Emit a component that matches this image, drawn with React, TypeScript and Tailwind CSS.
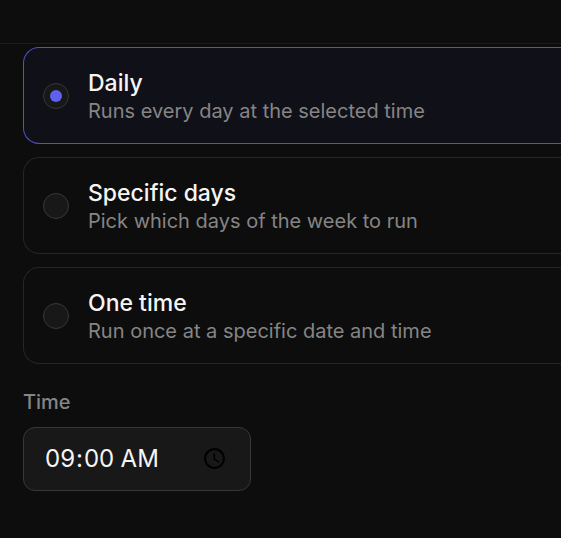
import { useState } from "react"

const OPTIONS = [
  { value: "daily", title: "Daily", description: "Runs every day at the selected time" },
  { value: "specific", title: "Specific days", description: "Pick which days of the week to run" },
  { value: "once", title: "One time", description: "Run once at a specific date and time" },
]

export default function App() {
  const [frequency, setFrequency] = useState("daily")
  const [time, setTime] = useState("09:00")

  return (
    <div className="min-h-screen overflow-hidden bg-[#0d0d0d] font-['Inter',sans-serif] text-[#f5f5f5]">
      <header className="h-11 border-b border-[#1c1c1c]" />

      <main className="pt-[3px] pb-12 pl-[23px]">
        <div role="radiogroup" aria-label="Frequency" className="flex flex-col gap-[13px]">
          {OPTIONS.map((option) => (
            <label
              key={option.value}
              className={`flex cursor-pointer items-center gap-[19px] rounded-l-2xl border border-r-0 px-[19px] py-[18px] ${
                frequency === option.value ? "border-[#5053c4] bg-[#101018]" : "border-[#262626]"
              }`}
            >
              <input
                type="radio"
                name="frequency"
                value={option.value}
                checked={frequency === option.value}
                onChange={() => setFrequency(option.value)}
                aria-label={option.title}
                className="grid size-[26px] shrink-0 appearance-none place-items-center rounded-full border border-[#383838] bg-[#181818] before:size-3 before:rounded-full checked:before:bg-[#5e61ee]"
              />
              <span className="flex min-w-0 flex-col pt-[2px]">
                <span className="text-[23px] leading-[30px] font-medium">{option.title}</span>
                <span className="text-[20px] leading-[27px] text-[#858585]">{option.description}</span>
              </span>
            </label>
          ))}
        </div>

        <div className="mt-6 flex flex-col items-start gap-[11px]">
          <label htmlFor="time" className="text-[20px] leading-7 font-medium text-[#858585]">
            Time
          </label>
          <input
            id="time"
            type="time"
            value={time}
            onChange={(e) => setTime(e.target.value)}
            className="h-16 w-[228px] rounded-xl border border-[#383838] bg-[#181818] px-5 text-[24px]"
          />
        </div>
      </main>
    </div>
  )
}
